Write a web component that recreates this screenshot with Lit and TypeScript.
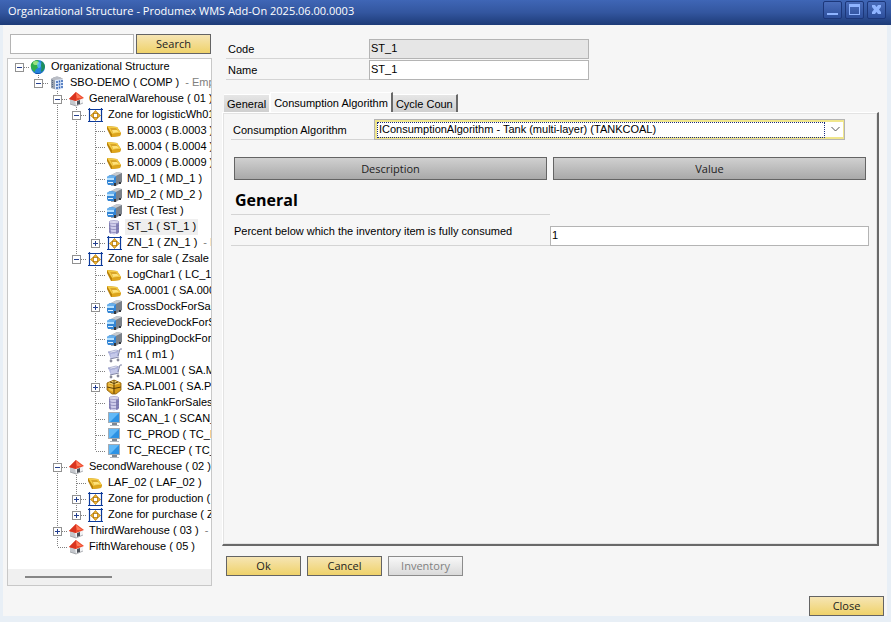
import { LitElement, html, css, svg, nothing, TemplateResult } from "lit";
import { customElement, property, state } from "lit/decorators.js";
import { classMap } from "lit/directives/class-map.js";

type IconName =
  | "globe" | "company" | "house" | "zone" | "bin"
  | "truck" | "tank" | "cart" | "barrel" | "screen";

interface TreeItem {
  label: string;
  icon: IconName;
  note?: string;
  selected?: boolean;
  closed?: boolean;
  children?: TreeItem[];
}

const leaf = (label: string, icon: IconName): TreeItem => ({ label, icon });

const TREE: TreeItem = {
  label: "Organizational Structure",
  icon: "globe",
  children: [
    {
      label: "SBO-DEMO ( COMP )",
      icon: "company",
      note: "- Empty",
      children: [
        {
          label: "GeneralWarehouse ( 01 )",
          icon: "house",
          children: [
            {
              label: "Zone for logisticWh01",
              icon: "zone",
              children: [
                leaf("B.0003 ( B.0003 )", "bin"),
                leaf("B.0004 ( B.0004 )", "bin"),
                leaf("B.0009 ( B.0009 )", "bin"),
                leaf("MD_1 ( MD_1 )", "truck"),
                leaf("MD_2 ( MD_2 )", "truck"),
                leaf("Test ( Test )", "truck"),
                { label: "ST_1 ( ST_1 )", icon: "tank", selected: true },
                { label: "ZN_1 ( ZN_1 )", icon: "zone", note: "- E", closed: true },
              ],
            },
            {
              label: "Zone for sale ( Zsale )",
              icon: "zone",
              children: [
                leaf("LogChar1 ( LC_1", "bin"),
                leaf("SA.0001 ( SA.000", "bin"),
                { label: "CrossDockForSale", icon: "truck", closed: true },
                leaf("RecieveDockForS", "truck"),
                leaf("ShippingDockForS", "truck"),
                leaf("m1 ( m1 )", "cart"),
                leaf("SA.ML001 ( SA.M", "cart"),
                { label: "SA.PL001 ( SA.PL", icon: "barrel", closed: true },
                leaf("SiloTankForSales", "tank"),
                leaf("SCAN_1 ( SCAN_", "screen"),
                leaf("TC_PROD ( TC_P", "screen"),
                leaf("TC_RECEP ( TC_", "screen"),
              ],
            },
          ],
        },
        {
          label: "SecondWarehouse ( 02 )",
          icon: "house",
          children: [
            leaf("LAF_02 ( LAF_02 )", "bin"),
            { label: "Zone for production (", icon: "zone", closed: true },
            { label: "Zone for purchase ( Z", icon: "zone", closed: true },
          ],
        },
        { label: "ThirdWarehouse ( 03 )", icon: "house", note: "- E", closed: true },
        leaf("FifthWarehouse ( 05 )", "house"),
      ],
    },
  ],
};

const GLYPHS: Record<IconName, TemplateResult> = {
  globe: svg`
    <circle cx="8" cy="8" r="7" fill="#2583dc"/>
    <path d="M8 1c2 2-1 4 1 6-1 3-4 2-4 6C2 12 0 8 1 5 3 2 5 1 8 1Z" fill="#2fae4c"/>
    <path d="M11 2c3 1 4 4 4 6-1 3-2 4-4 5 0-3 1-4 0-6 0-2 1-2 0-5Z" fill="#1f8f5c"/>
    <ellipse cx="6" cy="4" rx="3" ry="2" fill="#b4f08c" opacity=".8"/>
    <ellipse cx="9" cy="6" rx="2" ry="3" fill="#5cc0ff" opacity=".7"/>
    <path d="M3 13c3 3 9 3 11-2-1 2-3 3-5 3s-4 0-6-1Z" fill="#0b4ea8"/>`,
  company: svg`
    <path d="M2 4q6-5 12 0v9l-6 2-6-2Z" fill="#98a1ae"/>
    <path d="M2 4q6-5 12 0l-7 2Z" fill="#b9bcc4"/>
    <path d="M6 5l8-1v10l-8 1Z" fill="#dce8fa"/>
    <path d="M8 6v8M10.500 5.500v8M13 5v8" stroke="#3464b4" stroke-width="1.500" stroke-dasharray="2 1"/>
    <path d="M3.500 5v8" stroke="#5a6a84" stroke-dasharray="1 1"/>`,
  house: svg`
    <path d="M2 8l6 2v5l-6-2Z" fill="#c4c7cc"/>
    <path d="M7 9l8-2v5l-7 3Z" fill="#f1f2f4"/>
    <path d="M9 10l3-1v4l-3 1Z" fill="#4b5058"/>
    <path d="M8 1l8 6-8 3-7-2Z" fill="#ee4a2c"/>
    <path d="M8 1L1 8l7 2Z" fill="#d93420"/>
    <path d="M8 2l6 5-5 0Z" fill="#ff7a58"/>
    <path d="M2 13l6 2 7-3" fill="none" stroke="#8d9096" stroke-width=".7"/>`,
  zone: svg`
    <path d="M2 2h12v12H2Z" fill="#fff"/>
    <path d="M2.500 1v14M14.500 1v14M1 2.500h15M1 14.500h15" stroke="#0c3a9a" stroke-width="1.200"/>
    <path d="M8.500 3.500l2.500 3H6ZM8.500 13.500l2.500-3H6ZM3.500 8.500L6.500 6v5ZM13.500 8.500L10.500 6v5Z" fill="#f5b82a" stroke="#a86f04" stroke-width=".7" stroke-linejoin="round"/>`,
  bin: svg`
    <path d="M1 3l10 1 4 6-1 3-9 1-4-8Z" fill="#b98008"/>
    <path d="M1 3l10 1 4 6-9 1Z" fill="#f4cb45"/>
    <path d="M4 5l6 0 3 4-6 1Z" fill="#d9a62a"/>
    <path d="M6 7l5 0 2 2-6 1Z" fill="#ffe27a"/>
    <path d="M6 11l9-1-1 3-8 1Z" fill="#dfa61c"/>`,
  truck: svg`
    <path d="M5 4l6-3 5 1v9l-6 4H5Z" fill="#9da2a9"/>
    <path d="M5 4l6-3 5 1-6 3Z" fill="#c6cacf"/>
    <path d="M10 5l6-3v9l-6 3Z" fill="#7b8189"/>
    <path d="M1 6l3-2 6 1v9H2l-1-2Z" fill="#3385d4"/>
    <path d="M1 7h7v2H1Z" fill="#b4e0ff"/>
    <path d="M1 6l3-2 6 1-2 2H1Z" fill="#6ab0ec"/>
    <path d="M2 11h5v1H2Z" fill="#dff1ff"/>
    <path d="M8 12h2v3H8ZM13 11h2v2h-2Z" fill="#34383e"/>`,
  tank: svg`
    <path d="M3 3v10c0 3 10 3 10 0V3Z" fill="#8683b8"/>
    <path d="M4 3h6v12H5Z" fill="#cfcdea"/>
    <path d="M3 6c1 2 9 2 10 0M3 9c1 2 9 2 10 0M3 12c1 2 9 2 10 0" fill="none" stroke="#726fa6" stroke-width=".6"/>
    <ellipse cx="8" cy="3" rx="5" ry="1.500" fill="#dddcf0" stroke="#8683b8" stroke-width=".6"/>`,
  cart: svg`
    <path d="M2 5l10-2 1 6-8 3Z" fill="#b4b9e2"/>
    <path d="M2 5l8-2 3 1-8 2Z" fill="#eceefb" stroke="#8f94bd" stroke-width=".6"/>
    <path d="M6 7v4M8 7v4M10 6v4" stroke="#dfe1f6" stroke-width=".8"/>
    <path d="M12 9l2-7 2 0M4 12l9-2" fill="none" stroke="#8286a6"/>
    <circle cx="5" cy="14" r="1.400" fill="#88899a"/><circle cx="12" cy="13" r="1.400" fill="#88899a"/>`,
  barrel: svg`
    <path d="M1 4l7-3 7 3v7l-5 4H6l-5-4Z" fill="#d69a1a"/>
    <path d="M1 4l7-3 7 3-7 2Z" fill="#f8d774"/>
    <path d="M2 5l5 2v6l-4-2Z" fill="#efbe48"/>
    <path d="M8 1v14M1 8q7 3 14 0M4 3q4 3 8 0" fill="none" stroke="#5d3f06"/>
    <path d="M1 4l7-3 7 3v7l-5 4H6l-5-4Z" fill="none" stroke="#8b5d08" stroke-width=".8"/>`,
  screen: svg`
    <path d="M2 1h12v11H2Z" fill="#a2abb5"/>
    <path d="M3 2h10v9H3Z" fill="#2c92e4"/>
    <path d="M3 2h10l-9 9H3Z" fill="#62b9f7"/>
    <path d="M6 12h5v2H6Z" fill="#7e8791"/>
    <path d="M4 14h9v1H4Z" fill="#b0b6bd"/>`,
};

@customElement("tree-icon")
export class TreeIcon extends LitElement {
  @property() name: IconName = "bin";

  static styles = css`
    :host { display: block; flex: none; width: 16px; height: 16px; }
    .glyph { display: block; width: 16px; height: 16px; }
  `;

  render() {
    return html`<svg class="glyph" viewBox="0 0 16 16" aria-hidden="true">${GLYPHS[this.name]}</svg>`;
  }
}

@customElement("structure-tree")
export class StructureTree extends LitElement {
  static styles = css`
    :host {
      display: flex;
      flex-direction: column;
      min-height: 0;
      border: 1px solid #c8c8c8;
      background: #fff;
      font: 11px/16px "Liberation Sans", Arial, sans-serif;
      color: #000;
    }
    .list { flex: 1; min-height: 0; margin: 0; padding: 0 0 0 2px; overflow: hidden; list-style: none; }
    .group { margin: 0; padding: 0; list-style: none; }
    .row { display: flex; height: 16px; white-space: pre; }
    .cell { display: block; flex: none; width: 19px; height: 16px; }
    .dots { stroke: #808080; stroke-dasharray: 1 1; fill: none; }
    .box { fill: #fff; stroke: #919191; }
    .sign { stroke: #25408f; fill: none; }
    .icon { margin-left: 1px; }
    .label { margin-left: 3px; padding: 0 2px; line-height: 15px; }
    .selected { background: #efefef; }
    .note { margin-left: 4px; color: #808080; line-height: 15px; }
    .scroll { flex: none; height: 16px; padding: 7px 17px 0; box-sizing: border-box; background: #f0f0f0; }
    .thumb { width: 87px; height: 2px; background: #868686; }
  `;

  private cell(up: boolean, down: boolean, branch: boolean, toggle?: "+" | "-") {
    return svg`<svg class="cell" viewBox="0 0 19 16" shape-rendering="crispEdges" aria-hidden="true">
      ${up ? svg`<path class="dots" d="M9.500 0V8"/>` : nothing}
      ${down ? svg`<path class="dots" d="M9.500 8V16"/>` : nothing}
      ${branch ? svg`<path class="dots" d="M10 8.500H19"/>` : nothing}
      ${toggle ? svg`<rect class="box" x="5.500" y="4.500" width="8" height="8"/><path class="sign" d="M7 8.500H12"/>` : nothing}
      ${toggle === "+" ? svg`<path class="sign" d="M9.500 6V11"/>` : nothing}
    </svg>`;
  }

  private node(item: TreeItem, trail: boolean[], last: boolean): TemplateResult {
    const root = trail.length === 0;
    const toggle = item.children ? "-" : item.closed ? "+" : undefined;
    return html`<li role="treeitem" aria-selected=${item.selected ? "true" : "false"}>
      <div class="row">
        ${trail.map((on) => this.cell(on, on, false))}
        ${this.cell(!root, !root && !last, true, toggle)}
        <tree-icon class="icon" .name=${item.icon}></tree-icon>
        <span class=${classMap({ label: true, selected: !!item.selected })}>${item.label}</span>
        ${item.note ? html`<span class="note">${item.note}</span>` : nothing}
      </div>
      ${item.children
        ? html`<ul class="group" role="group">
            ${item.children.map((child, i, all) =>
              this.node(child, [...trail, !root && !last], i === all.length - 1))}
          </ul>`
        : nothing}
    </li>`;
  }

  render() {
    return html`
      <ul class="list" role="tree" aria-label="Organizational Structure">${this.node(TREE, [], true)}</ul>
      <div class="scroll"><div class="thumb"></div></div>
    `;
  }
}

@customElement("app-root")
export class AppRoot extends LitElement {
  @state() private tab = 1;

  static styles = css`
    :host {
      display: flex;
      flex-direction: column;
      height: 100vh;
      box-sizing: border-box;
      background: #e8eff6;
      color: #000;
      font: 11px/16px "Liberation Sans", Arial, sans-serif;
    }
    button, input, select { font: inherit; color: inherit; box-sizing: border-box; border-radius: 0; margin: 0; }
    .titlebar {
      flex: none;
      display: flex;
      justify-content: space-between;
      height: 25px;
      padding: 0 5px 0 8px;
      box-sizing: border-box;
      background: linear-gradient(#3f66b6, #33569f 50%, #1d3b78);
    }
    .title { margin: 0; font: 11px/22px "Open Sans", sans-serif; color: #fff; white-space: nowrap; }
    .winbtns { display: flex; gap: 3px; padding-top: 1px; }
    .winbtn {
      width: 19px;
      height: 18px;
      padding: 0;
      border: 1px solid #1c377a;
      border-radius: 2px;
      background: linear-gradient(#4a6dbb, #2d4f9c);
    }
    .winicon { display: block; width: 17px; height: 16px; }
    .body {
      flex: 1;
      min-height: 0;
      display: flex;
      margin: 0 4px 6px 3px;
      background: #f6f6f6;
    }
    .side { flex: none; width: 205px; display: flex; flex-direction: column; gap: 4px; padding: 9px 0 30px 4px; }
    .search { display: flex; gap: 2px; padding: 0 1px 0 3px; }
    .field { height: 20px; padding: 0 1px 2px; border: 1px solid #b4b4b4; background: #fff; min-width: 0; outline: none; }
    .field:disabled { background: #e6e6e6; color: #000; opacity: 1; }
    .query { flex: 1; }
    .tree { flex: 1; }
    .btn {
      width: 75px;
      height: 20px;
      padding: 0;
      border: 1px solid #646464;
      background: linear-gradient(#f6e5b4, #efd26a);
      font: 11px/16px "Open Sans", sans-serif;
      color: #222;
    }
    .btn:disabled { border-color: #8c8c8c; background: linear-gradient(#f8f8f8, #dadada); color: #808080; }
    .main { flex: 1; min-width: 0; display: flex; flex-direction: column; padding: 14px 3px 0 10px; }
    .form { display: grid; grid-template-columns: 143px 220px; gap: 1px 0; padding-left: 4px; }
    .caption { height: 20px; padding: 2px 2px 0; box-sizing: border-box; border-bottom: 1px solid #d4d4d4; }
    .tabs { display: flex; align-items: flex-end; height: 20px; margin-top: 12px; padding-left: 2px; }
    .tab {
      height: 18px;
      padding: 0 3px;
      border: 0;
      border-top: 1px solid #fff;
      border-right: 1px solid #fff;
      background: linear-gradient(#e6e6e6, #cfcfcf);
      white-space: nowrap;
    }
    .tab.on {
      height: 20px;
      background: #f6f6f6;
      border-left: 1px solid #fff;
      border-right: 2px solid #696969;
    }
    .tab.end { border-right: 2px solid #696969; }
    .panel {
      flex: 1;
      min-height: 0;
      margin-right: 5px;
      padding: 6px 8px 0;
      border: solid;
      border-width: 1px 2px 2px 1px;
      border-color: #fff #696969 #696969 #fff;
      box-shadow: inset 1px 1px #e3e3e3, inset -1px -1px #e3e3e3;
    }
    .algo { display: grid; grid-template-columns: 143px minmax(0, 471px); }
    .algo .caption { height: 21px; padding-top: 3px; }
    .combo {
      position: relative;
      height: 21px;
      box-sizing: border-box;
      border: 1px solid #b4b4b4;
      padding: 2px 1px 2px 2px;
      background: #f0e68c;
    }
    .select {
      display: block;
      width: 100%;
      height: 15px;
      padding: 0 20px 0 2px;
      border: 0;
      outline: none;
      appearance: none;
      background: #fff;
      line-height: 15px;
    }
    .focus { position: absolute; inset: 2px 19px 1px 2px; border: 1px dotted #1a2a80; pointer-events: none; }
    .chevron { position: absolute; top: 5px; right: 3px; width: 11px; height: 8px; pointer-events: none; }
    .grid { width: 100%; margin-top: 17px; border-spacing: 0; table-layout: fixed; }
    .grid td, .grid th { padding: 0; text-align: left; font-weight: normal; vertical-align: bottom; }
    .grid .head { padding: 0 3px; }
    .headbtn {
      display: block;
      width: 100%;
      height: 23px;
      padding: 0;
      border: 1px solid #646464;
      background: linear-gradient(#d0d0d0, #a9a9a9);
      font: 11px/16px "Open Sans", sans-serif;
      color: #222;
    }
    .grid .section {
      height: 34px;
      padding: 6px 4px 0;
      box-sizing: border-box;
      border-bottom: 1px solid #d4d4d4;
      vertical-align: top;
      font: bold 16px/28px "Open Sans", sans-serif;
    }
    .grid .rowname { height: 31px; box-sizing: border-box; padding: 8px 3px 0; vertical-align: top; border-bottom: 1px solid #d4d4d4; }
    .wide { display: block; width: 100%; }
    .actions { display: flex; gap: 6px; padding: 10px 0 0 4px; }
    .footer { display: flex; justify-content: flex-end; padding-top: 20px; }
  `;

  render() {
    const names = ["General", "Consumption Algorithm", "Cycle Coun"];
    return html`
      <header class="titlebar">
        <h1 class="title">Organizational Structure - Produmex WMS Add-On 2025.06.00.0003</h1>
        <div class="winbtns">
          <button class="winbtn" aria-label="Minimize">
            <svg class="winicon" viewBox="0 0 17 16"><path d="M3 11h11v2H3Z" fill="#8fb4ff"/></svg>
          </button>
          <button class="winbtn" aria-label="Maximize">
            <svg class="winicon" viewBox="0 0 17 16"><path d="M3 2h11v11H3ZM4 5v7h9V5Z" fill="#8fb4ff" fill-rule="evenodd"/></svg>
          </button>
          <button class="winbtn" aria-label="Close window">
            <svg class="winicon" viewBox="0 0 17 16"><path d="M4 3h3l1.500 2L10 3h3v2l-2 2.500L13 10v2h-3L8.500 10 7 12H4v-2l2-2.500L4 5Z" fill="#8fb4ff"/></svg>
          </button>
        </div>
      </header>
      <div class="body">
        <aside class="side">
          <div class="search">
            <input class="field query" type="text" aria-label="Search text" />
            <button class="btn">Search</button>
          </div>
          <structure-tree class="tree"></structure-tree>
        </aside>
        <main class="main">
          <div class="form">
            <label class="caption" for="code">Code</label>
            <input class="field" id="code" type="text" value="ST_1" disabled />
            <label class="caption" for="name">Name</label>
            <input class="field" id="name" type="text" value="ST_1" />
          </div>
          <div class="tabs" role="tablist">
            ${names.map((name, i) => html`<button
              role="tab"
              aria-selected=${this.tab === i ? "true" : "false"}
              class=${classMap({ tab: true, on: this.tab === i, end: i === names.length - 1 })}
              @click=${() => { this.tab = i; }}
            >${name}</button>`)}
          </div>
          <section class="panel" role="tabpanel">
            <div class="algo">
              <label class="caption" for="algorithm">Consumption Algorithm</label>
              <div class="combo">
                <select class="select" id="algorithm">
                  <option>IConsumptionAlgorithm - Tank (multi-layer) (TANKCOAL)</option>
                </select>
                <span class="focus"></span>
                <svg class="chevron" viewBox="0 0 11 8" aria-hidden="true">
                  <path d="M1.500 2l4 4 4-4" fill="none" stroke="#555"/>
                </svg>
              </div>
            </div>
            <table class="grid">
              <thead>
                <tr>
                  <th class="head" scope="col"><button class="headbtn">Description</button></th>
                  <th class="head" scope="col"><button class="headbtn">Value</button></th>
                </tr>
              </thead>
              <tbody>
                <tr><th class="section" scope="row">General</th><td></td></tr>
                <tr>
                  <th class="rowname" scope="row">
                    <label for="percent">Percent below which the inventory item is fully consumed</label>
                  </th>
                  <td><input class="field wide" id="percent" type="text" value="1" /></td>
                </tr>
              </tbody>
            </table>
          </section>
          <div class="actions">
            <button class="btn">Ok</button>
            <button class="btn">Cancel</button>
            <button class="btn" disabled>Inventory</button>
          </div>
          <div class="footer"><button class="btn">Close</button></div>
        </main>
      </div>
    `;
  }
}
